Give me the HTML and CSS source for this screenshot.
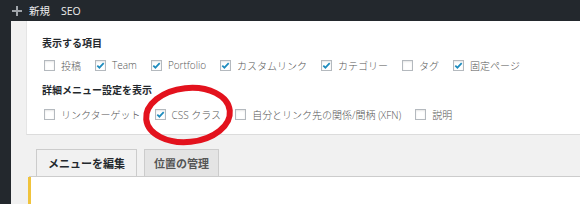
FILE: index.html
```html
<!DOCTYPE html>
<html lang="ja">
<head>
<meta charset="utf-8">
<link rel="stylesheet" href="styles.css">
</head>
<body>
<div class="adminbar">
  <svg class="plus" width="10" height="10" viewBox="0 0 10 10"><path d="M4 0h2v4h4v2H6v4H4V6H0V4h4z" fill="#a0a5aa"/></svg>
  <span class="ab-item">新規</span>
  <span class="ab-item seo">SEO</span>
</div>
<div class="layout">
  <div class="sidebar"></div>
  <div class="main">
    <div class="panel">
      <div class="heading">表示する項目</div>
      <div class="row">
        <label class="item"><span class="cb"></span>投稿</label>
        <label class="item"><span class="cb on"><svg viewBox="0 0 11 11"><path d="M2.3 5.6l2.1 2.1 4.3-4.6"/></svg></span>Team</label>
        <label class="item"><span class="cb on"><svg viewBox="0 0 11 11"><path d="M2.3 5.6l2.1 2.1 4.3-4.6"/></svg></span>Portfolio</label>
        <label class="item"><span class="cb on"><svg viewBox="0 0 11 11"><path d="M2.3 5.6l2.1 2.1 4.3-4.6"/></svg></span>カスタムリンク</label>
        <label class="item"><span class="cb on"><svg viewBox="0 0 11 11"><path d="M2.3 5.6l2.1 2.1 4.3-4.6"/></svg></span>カテゴリー</label>
        <label class="item"><span class="cb"></span>タグ</label>
        <label class="item"><span class="cb on"><svg viewBox="0 0 11 11"><path d="M2.3 5.6l2.1 2.1 4.3-4.6"/></svg></span>固定ページ</label>
      </div>
      <div class="heading h2">詳細メニュー設定を表示</div>
      <div class="row row2">
        <label class="item"><span class="cb"></span>リンクターゲット</label>
        <label class="item"><span class="cb on"><svg viewBox="0 0 11 11"><path d="M2.3 5.6l2.1 2.1 4.3-4.6"/></svg></span>CSS クラス</label>
        <label class="item"><span class="cb"></span>自分とリンク先の関係/間柄 (XFN)</label>
        <label class="item"><span class="cb"></span>説明</label>
      </div>
    </div>
    <div class="tabs">
      <span class="tab active">メニューを編集</span>
      <span class="tab">位置の管理</span>
    </div>
    <div class="content"></div>
  </div>
</div>
<svg class="circle" width="580" height="204" viewBox="0 0 580 204"><ellipse cx="188" cy="115" rx="42" ry="27" transform="rotate(-6 188 115)" fill="none" stroke="#e3121d" stroke-width="6"/></svg>
</body>
</html>
```
FILE: styles.css
```css
html, body {
  margin: 0;
  padding: 0;
  height: 204px;
  overflow: hidden;
}
body {
  background: #f1f1f1;
  font-family: "Open Sans", "Noto Sans CJK JP", sans-serif;
  color: #555;
  position: relative;
}
.adminbar {
  height: 21px;
  background: #23282d;
  display: flex;
  align-items: center;
  padding-left: 12px;
  color: #eee;
  font-size: 10.5px;
}
.plus { margin-right: 7px; }
.ab-item.seo { margin-left: 11px; }
.layout {
  display: flex;
  height: 183px;
}
.sidebar {
  width: 11px;
  background: #23282d;
}
.main {
  flex: 1;
  padding-left: 15px;
  display: flex;
  flex-direction: column;
}
.panel {
  background: #fff;
  border-left: 1px solid #e5e5e5;
  border-bottom: 1px solid #dcdcdc;
  padding: 15px 0 12px 15px;
  height: 86px;
}
.heading {
  font-size: 10px;
  line-height: 14px;
  font-weight: 600;
  color: #23282d;
}
.heading.h2 { margin-top: 10px; }
.row {
  display: flex;
  align-items: center;
  height: 16px;
  margin-top: 7px;
  margin-left: 2px;
  font-size: 10px;
  font-weight: 300;
  gap: 14px;
}
.row2 { margin-top: 9px; }
.item {
  display: flex;
  align-items: center;
  white-space: nowrap;
}
.cb {
  width: 11px;
  height: 11px;
  box-sizing: border-box;
  border: 1px solid #b4b9be;
  background: #fff;
  box-shadow: inset 0 1px 2px rgba(0,0,0,.1);
  margin-right: 6px;
  display: inline-flex;
}
.cb svg {
  width: 11px;
  height: 11px;
  margin: -1px;
}
.cb svg path {
  fill: none;
  stroke: #1e8cbe;
  stroke-width: 1.7;
}
.tabs {
  margin-top: 14px;
  margin-left: 3px;
  padding-left: 7px;
  display: flex;
  gap: 7px;
  border-bottom: 1px solid #ccc;
}
.tab {
  height: 27px;
  box-sizing: border-box;
  border: 1px solid #ccc;
  border-bottom: none;
  background: #e4e4e4;
  color: #555;
  font-size: 11px;
  font-weight: 700;
  display: flex;
  align-items: center;
  padding: 0 9px;
}
.tab.active {
  background: #f1f1f1;
  color: #23282d;
  padding: 0 11px;
}
.content {
  flex: 1;
  background: #fff;
  margin-left: 2px;
  border-left: 3px solid #f0c33c;
}
.circle {
  position: absolute;
  left: 0;
  top: 0;
  pointer-events: none;
}
```
